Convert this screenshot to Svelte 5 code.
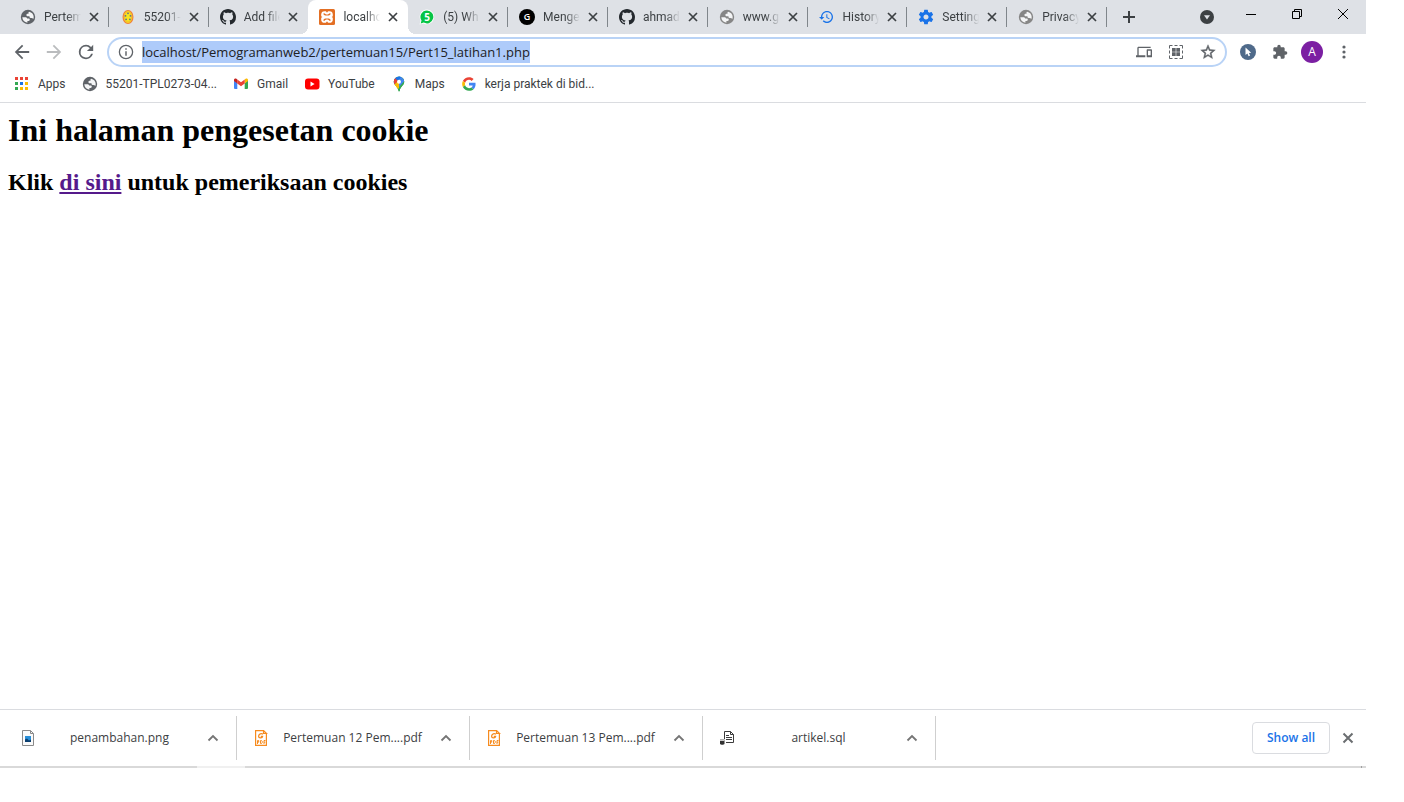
<script>
  import { onMount } from 'svelte';

  const tabs = [
    { title: 'Pertem', icon: 'globe', tone: 'dark' },
    { title: '55201-', icon: 'campus' },
    { title: 'Add file', icon: 'github' },
    { title: 'localho', icon: 'xampp', active: true },
    { title: '(5) Wh', icon: 'whatsapp' },
    { title: 'Menge', icon: 'gcircle' },
    { title: 'ahmad', icon: 'github' },
    { title: 'www.g', icon: 'globe', tone: 'light' },
    { title: 'History', icon: 'history' },
    { title: 'Setting', icon: 'gear' },
    { title: 'Privacy', icon: 'globe', tone: 'light' }
  ];

  const bookmarks = [
    { title: 'Apps', icon: 'apps' },
    { title: '55201-TPL0273-04...', icon: 'globe', tone: 'dark' },
    { title: 'Gmail', icon: 'gmail' },
    { title: 'YouTube', icon: 'youtube' },
    { title: 'Maps', icon: 'maps' },
    { title: 'kerja praktek di bid...', icon: 'google' }
  ];

  const downloads = [
    { name: 'penambahan.png', icon: 'image' },
    { name: 'Pertemuan 12 Pem....pdf', icon: 'pdf' },
    { name: 'Pertemuan 13 Pem....pdf', icon: 'pdf' },
    { name: 'artikel.sql', icon: 'sql' }
  ];

  let address = $state('localhost/Pemogramanweb2/pertemuan15/Pert15_latihan1.php');
  let addressBox;

  onMount(() => {
    addressBox.focus();
    addressBox.select();
  });
</script>

{#snippet glyph(name, tone)}
  {#if name === 'globe'}
    <svg class="i16 {tone}" viewBox="0 0 16 16" aria-hidden="true"><circle cx="8" cy="8" r="7.200" fill="currentColor"/><path fill="#f4f5f6" d="M9.200 2.700c2.600.5 4.500 2.700 4.500 5.300 0 .8-.2 1.500-.4 2.100-.4-.8-1.100-1.200-2-1.200h-.8c-.7 0-1-.5-1-1.100V7.200H7.900c-.9 0-1.500-.5-1.500-1.300S7 4.700 7.800 4.700h.7V3.600c0-.4.3-.8.7-.9zM2.300 8.300h3.200c.9 0 1.600.6 1.600 1.300h1.500c.7 0 1.200.5 1.200 1.200s-.5 1.200-1.200 1.200H7.400v1.700C4.500 13.400 2.400 11.200 2.300 8.300z"/></svg>
  {:else if name === 'campus'}
    <svg class="i16" viewBox="0 0 16 16" aria-hidden="true"><ellipse cx="8" cy="8" rx="4.900" ry="6.500" fill="#f7e51e" stroke="#f0813a" stroke-width="1.200"/><ellipse cx="8" cy="8" rx="3.600" ry="5" fill="none" stroke="#f3b22d" stroke-width=".8"/><g fill="#5a6f94"><circle cx="8" cy="4.300" r=".9"/><circle cx="5.500" cy="6.800" r=".9"/><circle cx="10.500" cy="6.800" r=".9"/><circle cx="6.100" cy="10.300" r=".9"/><circle cx="9.900" cy="10.300" r=".9"/></g></svg>
  {:else if name === 'github'}
    <svg class="i16" viewBox="0 0 16 16" aria-hidden="true"><path fill="#24292e" d="M8 0C3.58 0 0 3.58 0 8c0 3.540 2.290 6.530 5.470 7.590.4.070.55-.17.55-.38 0-.19-.01-.82-.01-1.490-2.010.37-2.530-.49-2.690-.94-.09-.23-.48-.94-.82-1.130-.28-.15-.68-.52-.01-.53.63-.01 1.080.58 1.230.82.72 1.210 1.870.87 2.330.66.070-.52.28-.87.51-1.070-1.780-.2-3.640-.89-3.640-3.950 0-.87.31-1.590.82-2.150-.08-.2-.36-1.020.08-2.120 0 0 .67-.21 2.200.82.64-.18 1.320-.27 2-.27s1.360.09 2 .27c1.530-1.040 2.200-.82 2.200-.82.44 1.100.16 1.920.08 2.120.51.56.82 1.270.82 2.150 0 3.070-1.870 3.750-3.650 3.950.29.25.54.73.54 1.480 0 1.070-.01 1.930-.01 2.200 0 .21.15.46.55.38A8.010 8.010 0 0 0 16 8c0-4.420-3.580-8-8-8z"/></svg>
  {:else if name === 'xampp'}
    <svg class="i16" viewBox="0 0 16 16" aria-hidden="true"><rect width="16" height="16" rx="1.500" fill="#e36f24"/><rect x="2.200" y="2.200" width="11.600" height="11.600" rx="3.400" fill="#fff"/><path fill="#e36f24" d="M6.500 1.500h3L8 3.800zM6.500 14.500h3L8 12.200zM1.500 7l1.900 1-1.900 1zM14.500 7l-1.900 1 1.900 1zM4.300 4.800c0-.8 1.500-.8 1.800 0 .4.900 3.400.9 3.800 0 .3-.8 1.800-.8 1.800 0 0 .9-1 1.400-2 1.800H6.300c-1-.4-2-.9-2-1.800zM4.300 11.200c0-.9 1-1.400 2-1.800h3.400c1 .4 2 .9 2 1.800 0 .8-1.500.8-1.800 0-.4-.9-3.400-.9-3.800 0-.3.8-1.800.8-1.800 0z"/></svg>
  {:else if name === 'whatsapp'}
    <svg class="i16" viewBox="0 0 16 16" aria-hidden="true"><path d="M8 .6a7.300 7.300 0 0 0-6.300 11L.5 15.500l4-1.100A7.300 7.300 0 1 0 8 .6z" fill="#fff"/><path d="M8 1.400a6.500 6.500 0 0 0-5.500 10l-.8 3 3-.8A6.500 6.500 0 1 0 8 1.400z" fill="#06c445"/><text x="8" y="11.500" text-anchor="middle" font-size="10" font-weight="700" fill="#fff">5</text></svg>
  {:else if name === 'gcircle'}
    <svg class="i16" viewBox="0 0 16 16" aria-hidden="true"><circle cx="8" cy="8" r="8" fill="#000"/><text x="8" y="11" text-anchor="middle" font-size="9" font-weight="600" fill="#fff">G</text></svg>
  {:else if name === 'history'}
    <svg class="i16" viewBox="1 0 24 24" aria-hidden="true"><path fill="#1a73e8" d="M13 3c-4.970 0-9 4.030-9 9H1l3.890 3.890.070.14L9 12H6c0-3.870 3.130-7 7-7s7 3.130 7 7-3.130 7-7 7c-1.930 0-3.680-.79-4.940-2.060l-1.420 1.420C8.270 19.990 10.510 21 13 21c4.970 0 9-4.030 9-9s-4.030-9-9-9zm-1 5v5l4.280 2.540.72-1.210-3.500-2.080V8H12z"/></svg>
  {:else if name === 'gear'}
    <svg class="i16" viewBox="1 1 22 22" aria-hidden="true"><path fill="#1a73e8" d="M19.430 12.980c.04-.32.070-.64.070-.98s-.03-.66-.07-.98l2.110-1.650c.19-.15.24-.42.12-.64l-2-3.460c-.12-.22-.39-.3-.61-.22l-2.490 1c-.52-.4-1.080-.73-1.690-.98l-.38-2.650C14.460 2.180 14.250 2 14 2h-4c-.25 0-.46.18-.49.42l-.38 2.650c-.61.25-1.170.59-1.690.98l-2.490-1c-.23-.09-.49 0-.61.22l-2 3.460c-.13.22-.07.49.12.64l2.110 1.650c-.04.32-.07.65-.07.98s.03.66.070.98l-2.110 1.650c-.19.15-.24.42-.12.64l2 3.460c.12.22.39.3.61.22l2.490-1c.52.4 1.080.73 1.690.98l.38 2.650c.03.24.24.42.49.42h4c.25 0 .46-.18.49-.42l.38-2.650c.61-.25 1.170-.59 1.690-.98l2.490 1c.23.09.49 0 .61-.22l2-3.460c.12-.22.070-.49-.12-.64l-2.110-1.650zM12 15.500c-1.930 0-3.500-1.570-3.500-3.500s1.570-3.500 3.500-3.500 3.500 1.570 3.500 3.500-1.570 3.500-3.500 3.500z"/></svg>
  {:else if name === 'apps'}
    <svg class="i16" viewBox="0 0 16 16" aria-hidden="true"><g fill="#ea4335"><path d="M1 1h3v3H1zM6 1h3v3H6zM11 1h3v3h-3z"/></g><path d="M1 6h3v3H1z" fill="#34a853"/><path d="M6 6h3v3H6z" fill="#1a73e8"/><path d="M11 6h3v3h-3z" fill="#fbbc04"/><path d="M1 11h3v3H1z" fill="#34a853"/><path d="M6 11h3v3H6zM11 11h3v3h-3z" fill="#fbbc04"/></svg>
  {:else if name === 'gmail'}
    <svg class="i16" viewBox="0 0 16 16" aria-hidden="true"><path d="M1 4.500v7.500a1 1 0 0 0 1 1h2.300V6.900z" fill="#4285f4"/><path d="M15 4.500v7.500a1 1 0 0 1-1 1h-2.300V6.900z" fill="#34a853"/><path d="M11.700 3.400v4L15 5V4c0-1.300-1.400-1.900-2.400-1.200z" fill="#fbbc04"/><path d="M4.300 7.400v-4L8 6.200l3.700-2.800v4L8 10.200z" fill="#ea4335"/><path d="M1 4v1l3.300 2.400v-4l-.9-.6C2.400 2.100 1 2.700 1 4z" fill="#c5221f"/></svg>
  {:else if name === 'youtube'}
    <svg class="i16" viewBox="0 0 16 16" aria-hidden="true"><rect x="1" y="2.500" width="14.500" height="11" rx="3" fill="#f00"/><path d="M6.500 5.600v4.800L10.600 8z" fill="#fff"/></svg>
  {:else if name === 'maps'}
    <svg class="i16" viewBox="0 0 16 16" aria-hidden="true"><clipPath id="pin"><path d="M8 .5A5.200 5.200 0 0 0 2.800 5.700c0 3.800 3.900 4.600 4.500 9 .1.900 1.300.9 1.400 0 .6-4.400 4.500-5.200 4.500-9A5.200 5.200 0 0 0 8 .5z"/></clipPath><g clip-path="url(#pin)"><path d="M0 0h16v16H0z" fill="#34a853"/><path d="M1 11 13 0l3 3-9 10z" fill="#fbbc04"/><path d="M8 0h8v2L8 6z" fill="#4285f4"/><path d="M8 5.500 13.500 1 16 8 8 16z" fill="#34a853"/><path d="M8 6 13 1l2 2-7 8z" fill="#4285f4"/><path d="M0 0h11L4 8 1 8z" fill="#1a73e8"/><path d="M0 2h4l3 3-3 4z" fill="#ea4335"/><path d="M3 9l4-4 1 3-3 4z" fill="#fbbc04"/></g><circle cx="8" cy="5.700" r="2" fill="#fff"/></svg>
  {:else if name === 'google'}
    <svg class="i16" viewBox="-4 -4 56 56" aria-hidden="true"><path fill="#ea4335" d="M24 9.500c3.540 0 6.710 1.220 9.210 3.600l6.850-6.850C35.900 2.380 30.470 0 24 0 14.620 0 6.510 5.380 2.560 13.220l7.980 6.190C12.430 13.720 17.740 9.500 24 9.500z"/><path fill="#4285f4" d="M46.980 24.550c0-1.570-.15-3.090-.38-4.550H24v9.020h12.940c-.58 2.960-2.260 5.480-4.780 7.180l7.730 6c4.510-4.180 7.090-10.360 7.090-17.650z"/><path fill="#fbbc05" d="M10.530 28.590A14.500 14.500 0 0 1 9.770 24c0-1.600.27-3.140.76-4.590l-7.980-6.190A23.900 23.900 0 0 0 0 24c0 3.880.92 7.540 2.560 10.780z"/><path fill="#34a853" d="M24 48c6.480 0 11.930-2.130 15.890-5.810l-7.730-6c-2.150 1.450-4.920 2.300-8.160 2.300-6.260 0-11.570-4.220-13.470-9.910l-7.980 6.190C6.510 42.620 14.620 48 24 48z"/></svg>
  {:else if name === 'image'}
    <svg class="i16" viewBox="0 0 16 16" aria-hidden="true"><path d="M2.500.5h8l3 3v12h-11z" fill="#fafafa" stroke="#8a8a8a"/><path d="M10.500.5v3h3" fill="none" stroke="#8a8a8a"/><path d="M5 6h6v6H5z" fill="#2a8fd8"/><path d="M5 12V9.500l2-1 2 2 2-1V12z" fill="#0b3f70"/></svg>
  {:else if name === 'pdf'}
    <svg class="i16" viewBox="0 0 16 16" aria-hidden="true"><path d="M10 .6H2.600v14.800h10.800V4M10.500.5v3h3z" fill="none" stroke="#f68b1f" stroke-width="1.200"/><path d="M10 4.200C8.500 2.900 5.600 3.800 5.600 6.200c0 2.200 3.700 2.400 4 .3H7.800" fill="none" stroke="#f68b1f" stroke-width="1.300"/><path d="M4.500 14v-3.500h1.200v1.700H4.500M7.500 10.500v3h1l.7-.7v-1.600l-.7-.7zM11 14v-3.500h1.500M11 12.200h1.300" fill="none" stroke="#f68b1f"/></svg>
  {:else if name === 'sql'}
    <svg class="i16" viewBox="0 0 16 16" aria-hidden="true"><path d="M5.500 9V1.500h6l3 3v8H7" fill="#fff" stroke="#3c3c3c"/><path d="M11.500 1.500v3h3M7 5.500h3M7 7.500h6M7 9.500h6" fill="none" stroke="#3c3c3c"/><path d="M1 9.500h4.500V14c-.8 1-3.700 1-4.500 0z" fill="#333"/><path d="M1 9.500h4.500V11H1z" fill="#ccc"/></svg>
  {/if}
{/snippet}

<div class="screen">
  <div class="browser">
    <header>
      <div class="strip">
        <div class="tabs" role="tablist">
          {#each tabs as tab, i}
            <div class="tab" class:active={tab.active} class:ruled={!tab.active && !tabs[i + 1]?.active}>
              <button class="pick" role="tab" aria-selected={!!tab.active}>
                {@render glyph(tab.icon, tab.tone)}
                <span class="title">{tab.title}</span>
              </button>
              <button class="shut" aria-label="Close tab">
                <svg viewBox="0 0 10 10" aria-hidden="true"><path d="M1 1l8 8M9 1L1 9" stroke="#3c4043" stroke-width="1.700"/></svg>
              </button>
            </div>
          {/each}
        </div>
        <button class="new" aria-label="New tab">
          <svg viewBox="0 0 12 12" aria-hidden="true"><path d="M6 0v12M0 6h12" stroke="#3c4043" stroke-width="2"/></svg>
        </button>
        <button class="search" aria-label="Search tabs">
          <svg viewBox="0 0 14 14" aria-hidden="true"><circle cx="7" cy="7" r="7" fill="#3c4043"/><path d="M4 5.200h6L7 9.500z" fill="#dee1e6"/></svg>
        </button>
        <div class="window">
          <button aria-label="Minimize"><svg viewBox="0 0 10 10" aria-hidden="true"><path d="M0 5.500h10" stroke="#000"/></svg></button>
          <button aria-label="Restore"><svg viewBox="0 0 10 10" aria-hidden="true"><path d="M.5 2.500h7v7h-7zM2.500 2.500v-2h7v7h-2" fill="none" stroke="#000"/></svg></button>
          <button aria-label="Close"><svg viewBox="0 0 10 10" aria-hidden="true"><path d="M0 0l10 10M10 0L0 10" stroke="#000"/></svg></button>
        </div>
      </div>

      <div class="toolbar">
        <button aria-label="Back"><svg class="i18" viewBox="2 2 20 20" aria-hidden="true"><path fill="#5f6368" d="M20 11H7.830l5.590-5.590L12 4l-8 8 8 8 1.410-1.410L7.830 13H20v-2z"/></svg></button>
        <button aria-label="Forward"><svg class="i18" viewBox="2 2 20 20" aria-hidden="true"><path fill="#babcbe" d="M12 4l-1.410 1.410L16.170 11H4v2h12.170l-5.580 5.590L12 20l8-8z"/></svg></button>
        <button aria-label="Reload"><svg class="i18" viewBox="2 2 20 20" aria-hidden="true"><path fill="#5f6368" d="M17.650 6.350A7.960 7.960 0 0 0 12 4a8 8 0 1 0 7.730 10h-2.080A6 6 0 1 1 12 6c1.660 0 3.140.69 4.220 1.780L13 11h7V4z"/></svg></button>
        <div class="omnibox">
          <button aria-label="Site information"><svg class="i16" viewBox="1 1 22 22" aria-hidden="true"><path fill="#5f6368" d="M11 17h2v-6h-2v6zm1-15a10 10 0 1 0 0 20 10 10 0 0 0 0-20zm0 18.200a8.200 8.200 0 1 1 0-16.400 8.200 8.200 0 0 1 0 16.400zM11 9h2V7h-2z"/></svg></button>
          <input bind:this={addressBox} bind:value={address} aria-label="Address" spellcheck="false" />
          <button aria-label="Send to your devices"><svg class="i16" viewBox="0 0 24 24" aria-hidden="true"><path fill="#5f6368" d="M4 6h18V4H4c-1.100 0-2 .9-2 2v11H0v3h14v-3H4V6zm19 2h-6c-.55 0-1 .45-1 1v10c0 .55.45 1 1 1h6c.55 0 1-.45 1-1V9c0-.55-.45-1-1-1zm-1 9h-4v-7h4v7z"/></svg></button>
          <button aria-label="Create QR code"><svg class="i16" viewBox="0 0 16 16" aria-hidden="true"><path d="M1.500 4.500v-3h3M6.500 1.500h3M11.500 1.500h3v3M14.500 6.500v3M14.500 11.500v3h-3M9.500 14.500h-3M4.500 14.500h-3v-3M1.500 9.500v-3" fill="none" stroke="#5f6368"/><path d="M4 4h3.700v3.700H4zM8.300 4H12v3.700H8.300zM4 8.300h3.700V12H4zM8.300 8.300H12V12H8.300z" fill="#5f6368"/></svg></button>
          <button aria-label="Bookmark this page"><svg class="i16" viewBox="1 1 22 22" aria-hidden="true"><path fill="#5f6368" stroke="#5f6368" stroke-width=".6" d="M22 9.240l-7.190-.62L12 2 9.190 8.630 2 9.240l5.460 4.730L5.820 21 12 17.270 18.180 21l-1.630-7.030L22 9.240zM12 15.400l-3.760 2.270 1-4.280-3.320-2.880 4.380-.38L12 6.100l1.710 4.040 4.380.38-3.320 2.880 1 4.280L12 15.400z"/></svg></button>
        </div>
        <div class="extras">
          <button aria-label="Pointer extension"><svg class="i16" viewBox="0 0 16 16" aria-hidden="true"><circle cx="8" cy="8" r="8" fill="#4f6a8a"/><path d="M5.500 3.500v7.600l1.900-1.500 1.200 2.700 1.500-.7-1.200-2.600 2.300-.3z" fill="#fff"/></svg></button>
          <button aria-label="Extensions"><svg class="i16" viewBox="0 0 24 24" aria-hidden="true"><path fill="#5f6368" d="M20.500 11H19V7c0-1.100-.9-2-2-2h-4V3.500a2.500 2.500 0 0 0-5 0V5H4c-1.100 0-2 .9-2 2v3.800h1.500c1.490 0 2.700 1.210 2.700 2.700S4.990 16.200 3.500 16.200H2V20c0 1.100.9 2 2 2h3.800v-1.500c0-1.490 1.210-2.700 2.700-2.700s2.700 1.210 2.700 2.700V22H17c1.100 0 2-.9 2-2v-4h1.500a2.500 2.500 0 0 0 0-5z"/></svg></button>
          <button class="avatar" aria-label="Profile A">A</button>
          <button aria-label="Menu"><svg class="i16" viewBox="0 0 16 16" aria-hidden="true"><g fill="#5f6368"><circle cx="8" cy="3" r="1.600"/><circle cx="8" cy="8" r="1.600"/><circle cx="8" cy="13" r="1.600"/></g></svg></button>
        </div>
      </div>

      <nav class="bookmarks" aria-label="Bookmarks">
        {#each bookmarks as mark}
          <a href="#{mark.icon}">{@render glyph(mark.icon, mark.tone)}<span>{mark.title}</span></a>
        {/each}
      </nav>
    </header>

    <main>
      <h1>Ini halaman pengesetan cookie</h1>
      <h2>Klik <a href="#cookies">di sini</a> untuk pemeriksaan cookies</h2>
    </main>

    <footer>
      <div class="shelf">
        {#each downloads as file}
          <div class="file">
            <button class="open">{@render glyph(file.icon)}<span>{file.name}</span></button>
            <button class="more" aria-label="Options for {file.name}"><svg viewBox="0 0 12 12" aria-hidden="true"><path d="M1.500 8.500L6 4l4.500 4.500" fill="none" stroke="#757575" stroke-width="1.800"/></svg></button>
          </div>
        {/each}
        <button class="all">Show all</button>
        <button class="dismiss" aria-label="Close downloads bar"><svg viewBox="0 0 12 12" aria-hidden="true"><path d="M1.500 1.500l9 9M10.500 1.500l-9 9" stroke="#6b6e71" stroke-width="2"/></svg></button>
      </div>
      <div class="taskline"><span></span><i></i></div>
    </footer>
  </div>
</div>

<style>
  :global(body) { margin: 0; background: #fff; }
  .screen {
    box-sizing: border-box;
    min-height: 100vh;
    display: flex;
    padding: 0 38px 34px 0;
    font: 12px/16px "Open Sans", "Noto Sans", sans-serif;
    color: #3c4043;
  }
  .browser { flex: 1; min-width: 0; display: flex; flex-direction: column; }
  svg { display: block; flex: none; }
  .i16 { width: 16px; height: 16px; }
  .i18 { width: 18px; height: 18px; }
  .dark { color: #5f6368; }
  .light { color: #868686; }
  button {
    display: flex;
    align-items: center;
    justify-content: center;
    padding: 0;
    border: 0;
    background: none;
    font: inherit;
    color: inherit;
  }

  .strip { display: flex; align-items: center; height: 34px; padding-left: 9px; background: #dee1e6; }
  .tabs { flex: 1; min-width: 0; display: flex; align-self: stretch; }
  .tab {
    position: relative;
    flex: 1 1 0;
    min-width: 0;
    box-sizing: border-box;
    display: flex;
    align-items: center;
    padding: 0 10px 0 11px;
  }
  .ruled::after {
    content: "";
    position: absolute;
    right: 0;
    top: 7px;
    width: 1px;
    height: 20px;
    background: #80868b;
  }
  .active { background: #fff; border-radius: 8px 8px 0 0; }
  .active::before, .active::after {
    content: "";
    position: absolute;
    bottom: 0;
    width: 8px;
    height: 8px;
  }
  .active::before { right: 100%; background: radial-gradient(circle at 0 0, #dee1e6 8px, #fff 8px); }
  .active::after { left: 100%; background: radial-gradient(circle at 100% 0, #dee1e6 8px, #fff 8px); }
  .pick { flex: 1; min-width: 0; gap: 8px; }
  .title {
    flex: 1;
    min-width: 0;
    white-space: nowrap;
    text-align: left;
    mask-image: linear-gradient(to right, #000 60%, transparent);
  }
  .title, .bookmarks { font-family: Roboto, "Open Sans", sans-serif; }
  .shut { margin-left: 8px; }
  .shut svg { width: 10px; height: 10px; }
  .new { width: 44px; height: 34px; }
  .new svg { width: 12px; height: 12px; }
  .search { width: 32px; margin-left: 40px; }
  .search svg { width: 14px; height: 14px; }
  .window { display: flex; align-self: flex-start; margin-left: 5px; }
  .window button { width: 46px; height: 28px; }
  .window svg { width: 10px; height: 10px; }

  .toolbar { display: flex; align-items: center; height: 36px; padding: 0 6px; }
  .toolbar > button { width: 32px; height: 32px; }
  .omnibox {
    flex: 1;
    min-width: 0;
    display: flex;
    align-items: center;
    box-sizing: border-box;
    height: 30px;
    margin-left: 5px;
    padding: 0 1px 0 9px;
    border: 2px solid #b9d3f6;
    border-radius: 15px;
  }
  .omnibox button { width: 32px; }
  .omnibox button:first-child { width: 16px; margin-right: 8px; }
  input {
    flex: 1;
    min-width: 0;
    padding: 0;
    border: 0;
    outline: 0;
    height: 22px;
    font: 13px/22px "Open Sans", "Noto Sans", sans-serif;
    color: #202124;
    background: none;
  }
  input::selection { background: #aecbfa; color: #202124; }
  .extras { display: flex; align-items: center; margin-left: 5px; }
  .extras button { width: 32px; }
  .extras .avatar {
    width: 22px;
    height: 22px;
    margin: 0 5px;
    border-radius: 50%;
    background: #7b1fa2;
    color: #fff;
  }

  .bookmarks {
    display: flex;
    align-items: center;
    box-sizing: border-box;
    height: 33px;
    padding: 0 6px 5px;
    border-bottom: 1px solid #dadce0;
  }
  .bookmarks a {
    display: flex;
    align-items: center;
    gap: 8px;
    padding: 0 8px;
    color: inherit;
    text-decoration: none;
    white-space: nowrap;
  }

  main { flex: 1; padding: 9px 8px; font-family: "Liberation Serif", serif; color: #000; }
  h1 { margin: 0; font-size: 32px; line-height: 37px; }
  h2 { margin: 20px 0 0; font-size: 24px; line-height: 27px; }
  h2 a { color: #551a8b; }

  .shelf {
    display: flex;
    align-items: center;
    height: 56px;
    padding: 0 10px 0 4px;
    border-top: 1px solid #dadce0;
  }
  .file {
    box-sizing: border-box;
    flex: 0 1 233px;
    min-width: 0;
    height: 44px;
    display: flex;
    align-items: center;
    padding: 0 17px 0 16px;
    border-right: 1px solid #cfcfcf;
  }
  .open { flex: 1; min-width: 0; gap: 12px; }
  .open span { flex: 1; min-width: 0; white-space: nowrap; }
  .more { margin-left: 16px; }
  .more svg, .dismiss svg { width: 12px; height: 12px; }
  .all {
    width: 78px;
    height: 32px;
    margin-left: auto;
    border: 1px solid #dadce0;
    border-radius: 4px;
    font-weight: 600;
    color: #1a73e8;
  }
  .dismiss { width: 16px; margin-left: 10px; }
  .taskline { display: flex; justify-content: space-between; height: 2px; padding: 0 4px 0 197px; background: #d9d9d9; }
  .taskline span { width: 48px; background: #f0f0f0; }
  .taskline i { width: 1px; background: #a0a0a0; }
</style>
